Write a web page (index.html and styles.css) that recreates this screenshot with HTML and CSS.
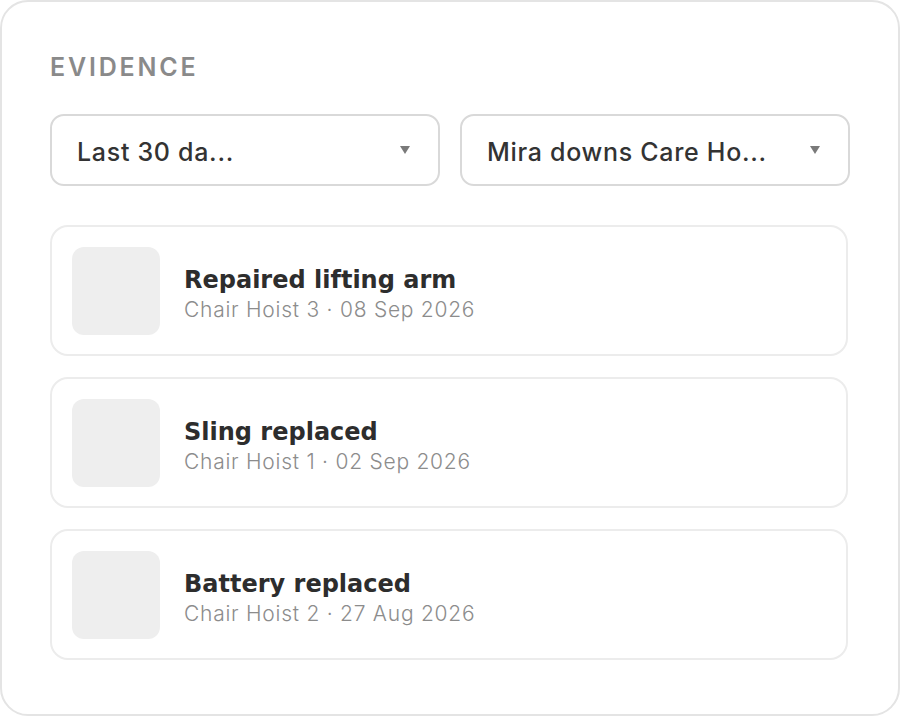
FILE: index.html
```html
<!DOCTYPE html>
<html lang="en">
<head>
<meta charset="utf-8">
<title>Evidence</title>
<link rel="stylesheet" href="styles.css">
</head>
<body>
<section class="card">
  <h2 class="heading">EVIDENCE</h2>
  <div class="filters">
    <div class="select"><span class="select-text">Last 30 da...</span><span class="caret"></span></div>
    <div class="select"><span class="select-text">Mira downs Care Ho...</span><span class="caret"></span></div>
  </div>
  <ul class="list">
    <li class="item">
      <div class="thumb"></div>
      <div class="info">
        <div class="title">Repaired lifting arm</div>
        <div class="meta">Chair Hoist 3 · 08 Sep 2026</div>
      </div>
    </li>
    <li class="item">
      <div class="thumb"></div>
      <div class="info">
        <div class="title">Sling replaced</div>
        <div class="meta">Chair Hoist 1 · 02 Sep 2026</div>
      </div>
    </li>
    <li class="item">
      <div class="thumb"></div>
      <div class="info">
        <div class="title">Battery replaced</div>
        <div class="meta">Chair Hoist 2 · 27 Aug 2026</div>
      </div>
    </li>
  </ul>
</section>
</body>
</html>
```
FILE: styles.css
```css
* { box-sizing: border-box; }
html, body { margin: 0; padding: 0; background: #ffffff; }
body { font-family: "Inter", "DejaVu Sans", sans-serif; color: #333333; }

.card {
  width: 900px;
  height: 716px;
  border: 2px solid #e4e4e4;
  border-radius: 28px;
  padding: 50px 48px 0 48px;
  background: #fff;
}

.heading {
  margin: 0;
  font-size: 25px;
  line-height: 30px;
  font-weight: 600;
  letter-spacing: 2.8px;
  color: #8a8a8a;
}

.filters {
  display: flex;
  gap: 20px;
  margin-top: 32px;
}

.select {
  flex: 1;
  height: 72px;
  border: 2px solid #d9d9d9;
  border-radius: 14px;
  display: flex;
  align-items: center;
  justify-content: space-between;
  padding: 4px 28px 0 25px;
}

.select-text {
  font-size: 25px;
  font-weight: 500;
  letter-spacing: 0.7px;
  color: #333;
}

.caret {
  width: 0;
  height: 0;
  margin-top: -4px;
  border-left: 5.5px solid transparent;
  border-right: 5.5px solid transparent;
  border-top: 8px solid #7a7a7a;
}

.list {
  list-style: none;
  margin: 39px 2px 0 0;
  padding: 0;
  display: flex;
  flex-direction: column;
  gap: 21px;
}

.item {
  height: 131px;
  border: 2px solid #ececec;
  border-radius: 18px;
  padding: 0 20px;
  display: flex;
  align-items: center;
  gap: 24px;
}

.thumb {
  width: 88px;
  height: 88px;
  border-radius: 12px;
  background: #eeeeee;
  flex: none;
}

.info {
  display: flex;
  flex-direction: column;
  padding-top: 9px;
}

.title {
  font-family: "DejaVu Sans", "Inter", sans-serif;
  font-size: 24px;
  line-height: 30px;
  font-weight: 700;
  color: #2d2d2d;
}

.meta {
  font-size: 21px;
  line-height: 30px;
  font-weight: 300;
  letter-spacing: 0.75px;
  color: #8c8c8c;
}
```
